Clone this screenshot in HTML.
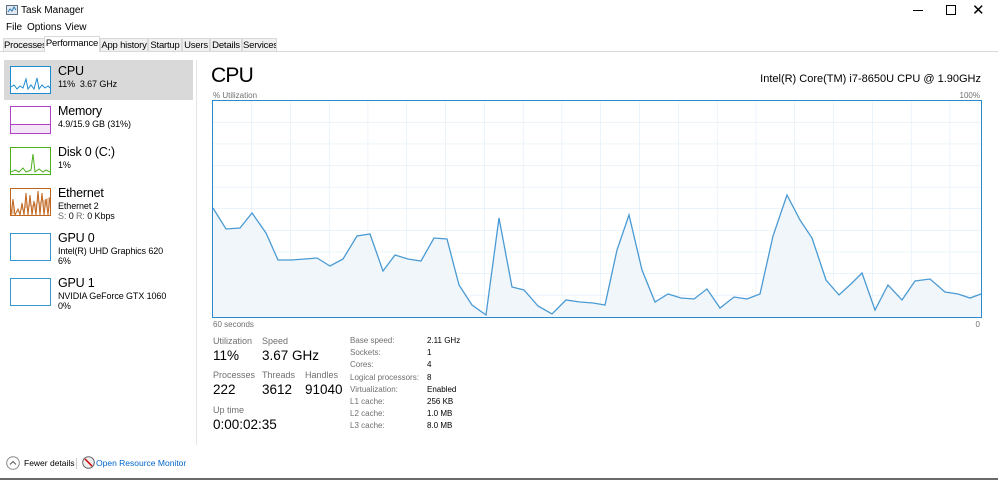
<!DOCTYPE html><html><head><style>
*{margin:0;padding:0;box-sizing:border-box}
body{width:998px;height:480px;background:#fff;font-family:"Liberation Sans",sans-serif;position:relative;overflow:hidden;color:#000}
.a{position:absolute;white-space:nowrap}
.g{color:#707070}
.tab{position:absolute;top:38px;height:14px;font-size:9.5px;line-height:13px;border:1px solid #d9d9d9;background:#f0f0f0;text-align:center;color:#000;letter-spacing:-0.2px;overflow:hidden}
.thumb{position:absolute;left:10px;width:41px;height:28px;border:1px solid}
.t{font-size:12.5px;letter-spacing:-0.2px}
.sb{font-size:9px;letter-spacing:-0.1px}
.big{font-size:13.5px}
.lb{font-size:9px}
</style></head><body>
<svg class="a" style="left:6px;top:4px" width="12" height="12"><rect x="0.5" y="1.5" width="11" height="9" fill="#dfe8f0" stroke="#607080"/><polyline points="2,8 4,5 6,7 8,3 10,6" fill="none" stroke="#2a7ab8"/></svg>
<div class="a" style="left:21px;top:5px;font-size:10px">Task Manager</div>
<div class="a" style="left:913px;top:10px;width:10px;height:1px;background:#000"></div>
<div class="a" style="left:946px;top:5px;width:10px;height:10px;border:1px solid #000"></div>
<div class="a" style="left:972px;top:1px;font-size:15px">✕</div>
<div class="a" style="left:6px;top:22px;font-size:10px">File</div>
<div class="a" style="left:27px;top:22px;font-size:10px">Options</div>
<div class="a" style="left:65px;top:22px;font-size:10px">View</div>
<div class="a" style="left:0;top:51px;width:998px;height:1px;background:#d9d9d9"></div>
<div class="tab" style="left:3px;width:42px">Processes</div>
<div class="tab" style="left:44px;top:36px;height:16px;width:56px;background:#fff;border-bottom:none;line-height:14px">Performance</div>
<div class="tab" style="left:100px;width:48px">App history</div>
<div class="tab" style="left:148px;width:34px">Startup</div>
<div class="tab" style="left:182px;width:28px">Users</div>
<div class="tab" style="left:210px;width:32px">Details</div>
<div class="tab" style="left:242px;width:35px">Services</div>
<div class="a" style="left:196px;top:60px;width:1px;height:385px;background:#e5e5e5"></div>
<div class="a" style="left:4px;top:60px;width:189px;height:40px;background:#d9d9d9"></div>
<div class="thumb" style="top:66px;border-color:#1e8ad0;background:#fff"><svg width="39" height="26"><polyline points="0,20 3,18 6,22 9,19 12,21 15,12 17,22 20,18 23,22 26,11 28,22 31,18 34,21 37,19 39,21" fill="none" stroke="#1e8ad0"/></svg></div>
<div class="a t" style="left:58px;top:64px">CPU</div><div class="a sb" style="left:58px;top:79px">11%&nbsp; 3.67 GHz</div>
<div class="thumb" style="top:106px;border-color:#b040c8"><div style="position:absolute;left:0;right:0;bottom:0;height:9px;background:#f3e6f6;border-top:1px solid #b040c8"></div></div>
<div class="a t" style="left:58px;top:104px">Memory</div><div class="a sb" style="left:58px;top:119px">4.9/15.9 GB (31%)</div>
<div class="thumb" style="top:147px;border-color:#4caf1e"><svg width="39" height="26"><polyline points="0,24 4,22 8,24 12,20 15,24 20,22 22,6 24,24 28,21 32,24 35,22 39,24" fill="none" stroke="#4caf1e"/></svg></div>
<div class="a t" style="left:58px;top:145px">Disk 0 (C:)</div><div class="a sb" style="left:58px;top:160px">1%</div>
<div class="thumb" style="top:188px;border-color:#c0651e"><svg width="39" height="26"><polyline points="0,26 2,10 4,26 7,20 9,26 11,14 13,26 15,4 17,26 19,6 21,26 23,12 25,26 27,2 29,26 31,4 33,26 35,10 37,26 39,8" fill="#e6c2a6" stroke="#c0651e"/></svg></div>
<div class="a t" style="left:58px;top:186px">Ethernet</div><div class="a sb" style="left:58px;top:201px">Ethernet 2</div><div class="a sb" style="left:58px;top:211px"><span class="g">S:</span> 0 <span class="g">R:</span> 0 Kbps</div>
<div class="thumb" style="top:233px;border-color:#3a96d0"></div>
<div class="a t" style="left:58px;top:231px">GPU 0</div><div class="a sb" style="left:58px;top:246px">Intel(R) UHD Graphics 620</div><div class="a sb" style="left:58px;top:256px">6%</div>
<div class="thumb" style="top:278px;border-color:#3a96d0"></div>
<div class="a t" style="left:58px;top:276px">GPU 1</div><div class="a sb" style="left:58px;top:291px">NVIDIA GeForce GTX 1060</div><div class="a sb" style="left:58px;top:301px">0%</div>
<div class="a" style="left:211px;top:64px;font-size:21px;letter-spacing:-0.8px">CPU</div>
<div class="a" style="right:17px;top:73px;font-size:11px">Intel(R) Core(TM) i7-8650U CPU @ 1.90GHz</div>
<div class="a g" style="left:213px;top:91px;font-size:8px">% Utilization</div>
<div class="a g" style="right:18px;top:91px;font-size:8px">100%</div>
<svg class="a" style="left:212px;top:100px" width="770" height="218">
<defs><pattern id="p" width="38.8" height="21.6" patternUnits="userSpaceOnUse" x="1" y="1"><path d="M38.8 0V21.6M0 21.6H38.8" fill="none" stroke="#d9eaf7" stroke-width="1"/></pattern></defs>
<rect x="1" y="1" width="768" height="216" fill="url(#p)"/>
<polygon fill="#f1f6fb" points="1,108 14,129 28,128 40,113 54,133 66,160 79,160 93,159 105,158 118,166 131,159 145,136 158,134 171,171 183,155 196,159 209,161 222,138 235,139 247,185 260,205 274,215 287,118 300,187 312,190 326,206 340,214 354,200 368,202 381,203 393,205 405,150 417,115 430,170 443,202 456,194 469,198 482,199 495,189 508,208 522,197 535,199 548,194 561,136 575,95 588,120 600,138 614,180 627,195 640,183 650,173 663,210 676,185 690,200 703,181 718,179 733,192 746,194 758,198 769,194 769,217 1,217"/>
<polyline fill="none" stroke="#4a9bd4" stroke-width="1.3" points="1,108 14,129 28,128 40,113 54,133 66,160 79,160 93,159 105,158 118,166 131,159 145,136 158,134 171,171 183,155 196,159 209,161 222,138 235,139 247,185 260,205 274,215 287,118 300,187 312,190 326,206 340,214 354,200 368,202 381,203 393,205 405,150 417,115 430,170 443,202 456,194 469,198 482,199 495,189 508,208 522,197 535,199 548,194 561,136 575,95 588,120 600,138 614,180 627,195 640,183 650,173 663,210 676,185 690,200 703,181 718,179 733,192 746,194 758,198 769,194"/>
<rect x="0.5" y="0.5" width="769" height="217" fill="none" stroke="#2a8ad0"/>
</svg>
<div class="a g" style="left:213px;top:320px;font-size:8px">60 seconds</div>
<div class="a g" style="right:18px;top:320px;font-size:8px">0</div>
<div class="a g lb" style="left:213px;top:336px">Utilization</div><div class="a g lb" style="left:262px;top:336px">Speed</div>
<div class="a big" style="left:213px;top:348px">11%</div><div class="a big" style="left:262px;top:348px">3.67 GHz</div>
<div class="a g lb" style="left:213px;top:370px">Processes</div><div class="a g lb" style="left:262px;top:370px">Threads</div><div class="a g lb" style="left:305px;top:370px">Handles</div>
<div class="a big" style="left:213px;top:382px">222</div><div class="a big" style="left:262px;top:382px">3612</div><div class="a big" style="left:305px;top:382px">91040</div>
<div class="a g lb" style="left:213px;top:405px">Up time</div>
<div class="a big" style="left:213px;top:417px">0:00:02:35</div>
<div class="a g" style="left:350px;top:335px;font-size:8px;line-height:12.2px">Base speed:<br>Sockets:<br>Cores:<br>Logical processors:<br>Virtualization:<br>L1 cache:<br>L2 cache:<br>L3 cache:</div>
<div class="a" style="left:427px;top:335px;font-size:8px;line-height:12.2px">2.11 GHz<br>1<br>4<br>8<br>Enabled<br>256 KB<br>1.0 MB<br>8.0 MB</div>
<svg class="a" style="left:6px;top:456px" width="14" height="14"><circle cx="7" cy="7" r="6.3" fill="none" stroke="#888"/><polyline points="4,8.5 7,5.5 10,8.5" fill="none" stroke="#555"/></svg>
<div class="a" style="left:24px;top:458px;font-size:8.5px">Fewer details</div>
<div class="a" style="left:76px;top:458px;width:1px;height:11px;background:#ccc"></div>
<svg class="a" style="left:82px;top:456px" width="13" height="13"><circle cx="6.5" cy="6.5" r="5.8" fill="#eee" stroke="#666"/><line x1="3" y1="3" x2="10" y2="10" stroke="#c00" stroke-width="1.5"/></svg>
<div class="a" style="left:96px;top:458px;font-size:8.5px;color:#0066cc">Open Resource Monitor</div>
<div class="a" style="left:0;top:478px;width:998px;height:2px;background:#6a6a6a"></div>
</body></html>
